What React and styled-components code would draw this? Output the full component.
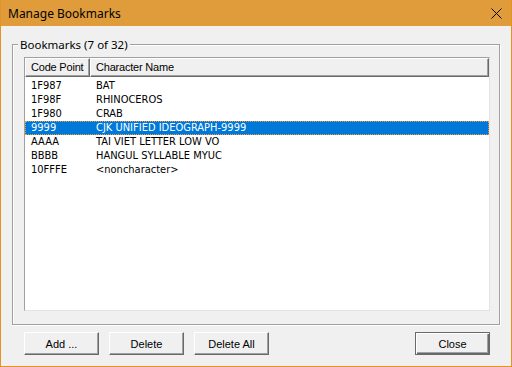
import React from "react";
import styled, { createGlobalStyle } from "styled-components";

const GlobalStyle = createGlobalStyle`
  body {
    margin: 0;
    background: #ffffff;
  }
`;

const Window = styled.div`
  width: 512px;
  height: 367px;
  box-sizing: border-box;
  border: 1px solid #e6921f;
  border-top: none;
  display: flex;
  flex-direction: column;
  background: #f0f0f0;
  font-family: "Liberation Sans", Arial, sans-serif;
  font-size: 11px;
  color: #000;
`;

const TitleBar = styled.div`
  height: 26px;
  flex: none;
  display: flex;
  align-items: center;
  padding: 0 9px 0 7px;
  background: #e09c3b;
  font-family: "Noto Sans", "Open Sans", sans-serif;
  font-size: 12px;
  color: #000;
`;

const CloseGlyph = styled.svg`
  margin-left: auto;
  width: 11px;
  height: 11px;
`;

const Body = styled.div`
  flex: 1;
  display: flex;
  flex-direction: column;
  padding: 18px 11px 11px 11px;
`;

const GroupBox = styled.div`
  position: relative;
  height: 281px;
  box-sizing: border-box;
  border: 1px solid #a0a0a0;
  box-shadow: inset 1px 1px 0 #fff, 1px 1px 0 #fff;
  padding: 12px 9px 13px 11px;
  display: flex;
`;

const Legend = styled.span`
  position: absolute;
  top: -8px;
  left: 5px;
  padding: 0 2px;
  background: #f0f0f0;
  font-family: "Noto Sans", "Open Sans", sans-serif;
  font-size: 11.5px;
  line-height: 15px;
`;

const ListView = styled.div`
  flex: 1;
  display: flex;
  flex-direction: column;
  background: #fff;
  border: 1px solid;
  border-color: #a0a0a0 #e3e3e3 #e3e3e3 #a0a0a0;
`;

const Header = styled.div`
  display: flex;
  height: 19px;
  flex: none;
`;

const HeaderCell = styled.div`
  box-sizing: border-box;
  width: ${(p) => (p.$w ? `${p.$w}px` : "auto")};
  flex: ${(p) => (p.$w ? "none" : "1")};
  background: #f0f0f0;
  border: 1px solid;
  border-color: #fff #696969 #696969 #fff;
  box-shadow: inset -1px -1px 0 #a0a0a0;
  padding-left: 5px;
  line-height: 16px;
  letter-spacing: -0.2px;
`;

const Rows = styled.div`
  padding-top: 2px;
`;

const Row = styled.div`
  display: flex;
  height: 14px;
  line-height: 14px;
  font-family: "DejaVu Sans Condensed", "Liberation Sans", sans-serif;
  font-size: 11px;
  background: ${(p) => (p.$selected ? "#0078d7" : "transparent")};
  color: ${(p) => (p.$selected ? "#fff" : "#000")};
  outline: ${(p) => (p.$selected ? "1px dotted #f09a3a" : "none")};
  outline-offset: -1px;
`;

const Cell = styled.div`
  box-sizing: border-box;
  width: ${(p) => (p.$w ? `${p.$w}px` : "auto")};
  flex: ${(p) => (p.$w ? "none" : "1")};
  padding-left: 6px;
  white-space: nowrap;
`;

const ButtonRow = styled.div`
  display: flex;
  gap: 10px;
  margin-top: 7px;
  padding: 0 10px 0 12px;
`;

const Button = styled.button`
  width: 75px;
  height: 23px;
  box-sizing: border-box;
  padding: 0;
  background: #f0f0f0;
  font-family: "Liberation Sans", Arial, sans-serif;
  font-size: 11px;
  color: #000;
  border: 1px solid;
  border-color: ${(p) =>
    p.$default ? "#696969" : "#fff #696969 #696969 #fff"};
  box-shadow: ${(p) =>
    p.$default
      ? "inset 1px 1px 0 #fff, inset -1px -1px 0 #696969, inset -2px -2px 0 #a0a0a0"
      : "inset -1px -1px 0 #a0a0a0"};
  margin-left: ${(p) => (p.$push ? "auto" : "0")};
`;

const bookmarks = [
  ["1F987", "BAT"],
  ["1F98F", "RHINOCEROS"],
  ["1F980", "CRAB"],
  ["9999", "CJK UNIFIED IDEOGRAPH-9999"],
  ["AAAA", "TAI VIET LETTER LOW VO"],
  ["BBBB", "HANGUL SYLLABLE MYUC"],
  ["10FFFE", "<noncharacter>"],
];

export default function App() {
  return (
    <>
      <GlobalStyle />
      <Window>
        <TitleBar>
          Manage Bookmarks
          <CloseGlyph viewBox="0 0 11 11">
            <path d="M0.5 0.5 L10.5 10.5 M10.5 0.5 L0.5 10.5" stroke="#000" strokeWidth="1" />
          </CloseGlyph>
        </TitleBar>
        <Body>
          <GroupBox>
            <Legend>Bookmarks (7 of 32)</Legend>
            <ListView>
              <Header>
                <HeaderCell $w={65}>Code Point</HeaderCell>
                <HeaderCell>Character Name</HeaderCell>
              </Header>
              <Rows>
                {bookmarks.map(([code, name], i) => (
                  <Row key={code} $selected={i === 3}>
                    <Cell $w={65}>{code}</Cell>
                    <Cell>{name}</Cell>
                  </Row>
                ))}
              </Rows>
            </ListView>
          </GroupBox>
          <ButtonRow>
            <Button>Add ...</Button>
            <Button>Delete</Button>
            <Button>Delete All</Button>
            <Button $default $push>
              Close
            </Button>
          </ButtonRow>
        </Body>
      </Window>
    </>
  );
}
